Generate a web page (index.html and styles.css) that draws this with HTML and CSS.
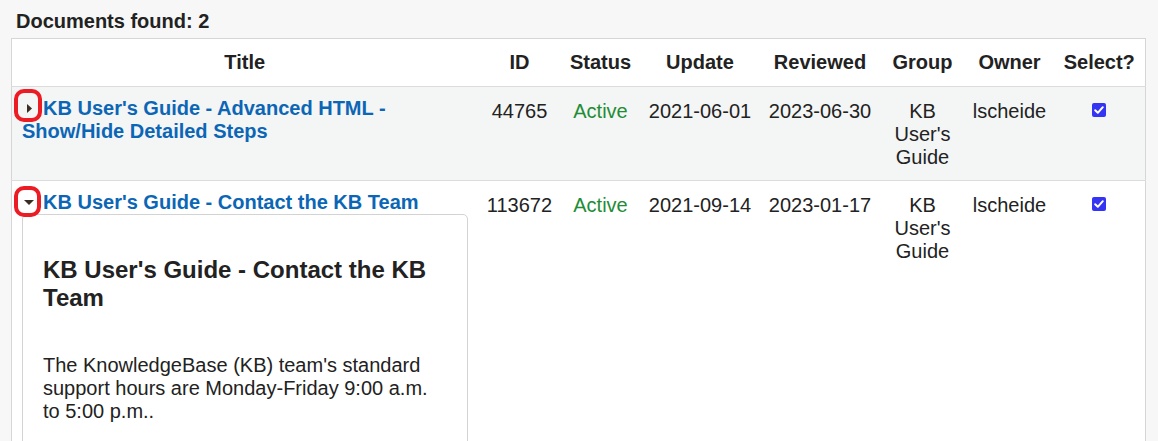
FILE: index.html
```html
<!DOCTYPE html>
<html lang="en">
<head>
<meta charset="utf-8">
<title>Documents found</title>
<link rel="stylesheet" href="styles.css">
</head>
<body>
<div class="page">
  <h1 class="count">Documents found: 2</h1>
  <table class="docs">
    <thead>
      <tr>
        <th class="c-title">Title</th>
        <th class="c-id">ID</th>
        <th class="c-status">Status</th>
        <th class="c-update">Update</th>
        <th class="c-reviewed">Reviewed</th>
        <th class="c-group">Group</th>
        <th class="c-owner">Owner</th>
        <th class="c-select">Select?</th>
      </tr>
    </thead>
    <tbody>
      <tr class="shade">
        <td class="title-cell">
          <div class="summary">
            <span class="marker marker-closed">
              <svg class="tri" width="5" height="9" viewBox="0 0 5 9"><polygon points="0,0 5,4.5 0,9" fill="#3a2e22"/></svg>
              <span class="ring ring-1"></span>
            </span><a class="doc-link" href="#">KB User's Guide - Advanced HTML - Show/Hide Detailed Steps</a>
          </div>
        </td>
        <td>44765</td>
        <td class="active">Active</td>
        <td>2021-06-01</td>
        <td>2023-06-30</td>
        <td>KB User's Guide</td>
        <td>lscheide</td>
        <td><input class="check" type="checkbox" checked></td>
      </tr>
      <tr>
        <td class="title-cell">
          <div class="summary">
            <span class="marker marker-open">
              <svg class="tri" width="10" height="5" viewBox="0 0 10 5"><polygon points="0,0 10,0 5,5" fill="#3a2e22"/></svg>
              <span class="ring ring-2"></span>
            </span><a class="doc-link" href="#">KB User's Guide - Contact the KB Team</a>
          </div>
          <div class="card">
            <h2 class="card-title">KB User's Guide - Contact the KB Team</h2>
            <p class="card-text">The KnowledgeBase (KB) team's standard support hours are Monday-Friday 9:00 a.m. to 5:00 p.m..</p>
          </div>
        </td>
        <td>113672</td>
        <td class="active">Active</td>
        <td>2021-09-14</td>
        <td>2023-01-17</td>
        <td>KB User's Guide</td>
        <td>lscheide</td>
        <td><input class="check" type="checkbox" checked></td>
      </tr>
    </tbody>
  </table>
</div>
</body>
</html>
```

FILE: styles.css
```css
html, body {
  margin: 0;
  padding: 0;
  background: #f7f7f7;
}

body {
  font-family: "Liberation Sans", Arial, sans-serif;
  font-size: 20px;
  color: #222222;
}

.page {
  padding: 10px 0 0 11px;
}

.count {
  margin: 0 0 5px 5px;
  font-size: 20px;
  font-weight: bold;
  line-height: 23px;
  color: #222222;
}

.docs {
  width: 1134px;
  table-layout: fixed;
  border-collapse: collapse;
  border: 1px solid #d6d6d6;
  background: #ffffff;
}

.docs th,
.docs td {
  box-sizing: border-box;
  line-height: 23px;
  text-align: center;
  vertical-align: top;
}

.docs th {
  padding: 12px 6px 12px;
  font-weight: bold;
  color: #222222;
  border-bottom: 1px solid #dcdcdc;
}

.docs td {
  padding: 13px 6px 11px;
  border-bottom: 1px solid #dcdcdc;
}

.c-title { width: 466px; }
.c-id { width: 84px; }
.c-status { width: 78px; }
.c-update { width: 121px; }
.c-reviewed { width: 119px; }
.c-group { width: 86px; }
.c-owner { width: 88px; }
.c-select { width: 92px; }

.shade td {
  background: #f4f5f5;
}

.docs td.title-cell {
  text-align: left;
  padding: 10px 10px 10px;
}

.summary {
  line-height: 23px;
}

.marker {
  position: relative;
  display: inline-block;
  width: 21px;
  height: 23px;
  vertical-align: top;
}

.tri {
  position: absolute;
  display: block;
}

.marker-closed .tri {
  left: 5px;
  top: 7px;
}

.marker-open .tri {
  left: 2px;
  top: 9px;
}

.ring {
  position: absolute;
  box-sizing: border-box;
  border: 4px solid #ec1c24;
  border-radius: 10px;
}

.ring-1 {
  left: -8px;
  top: -8px;
  width: 28px;
  height: 33px;
}

.ring-2 {
  left: -8px;
  top: -5px;
  width: 27px;
  height: 31px;
}

.doc-link {
  color: #0b66b5;
  font-weight: bold;
  text-decoration: none;
}

.active {
  color: #1f8c36;
}

.check {
  appearance: none;
  -webkit-appearance: none;
  display: inline-block;
  width: 14px;
  height: 14px;
  margin: 3px 0 0;
  vertical-align: top;
  border-radius: 2px;
  background: #3434f4 url("data:image/svg+xml,%3Csvg xmlns='http://www.w3.org/2000/svg' viewBox='0 0 14 14'%3E%3Cpath d='M3.2 7.2 L5.8 9.8 L10.8 4.2' fill='none' stroke='white' stroke-width='2' stroke-linecap='round' stroke-linejoin='round'/%3E%3C/svg%3E") no-repeat center / 14px 14px;
}

.card {
  border: 1px solid #d3d3d3;
  border-radius: 5px;
  padding: 20px;
  background: #ffffff;
}

.card-title {
  margin: 21px 0 0;
  font-size: 24px;
  font-weight: bold;
  line-height: 28px;
  color: #222222;
}

.card-text {
  margin: 42px 0 20px;
  line-height: 23px;
  color: #222222;
}
```
